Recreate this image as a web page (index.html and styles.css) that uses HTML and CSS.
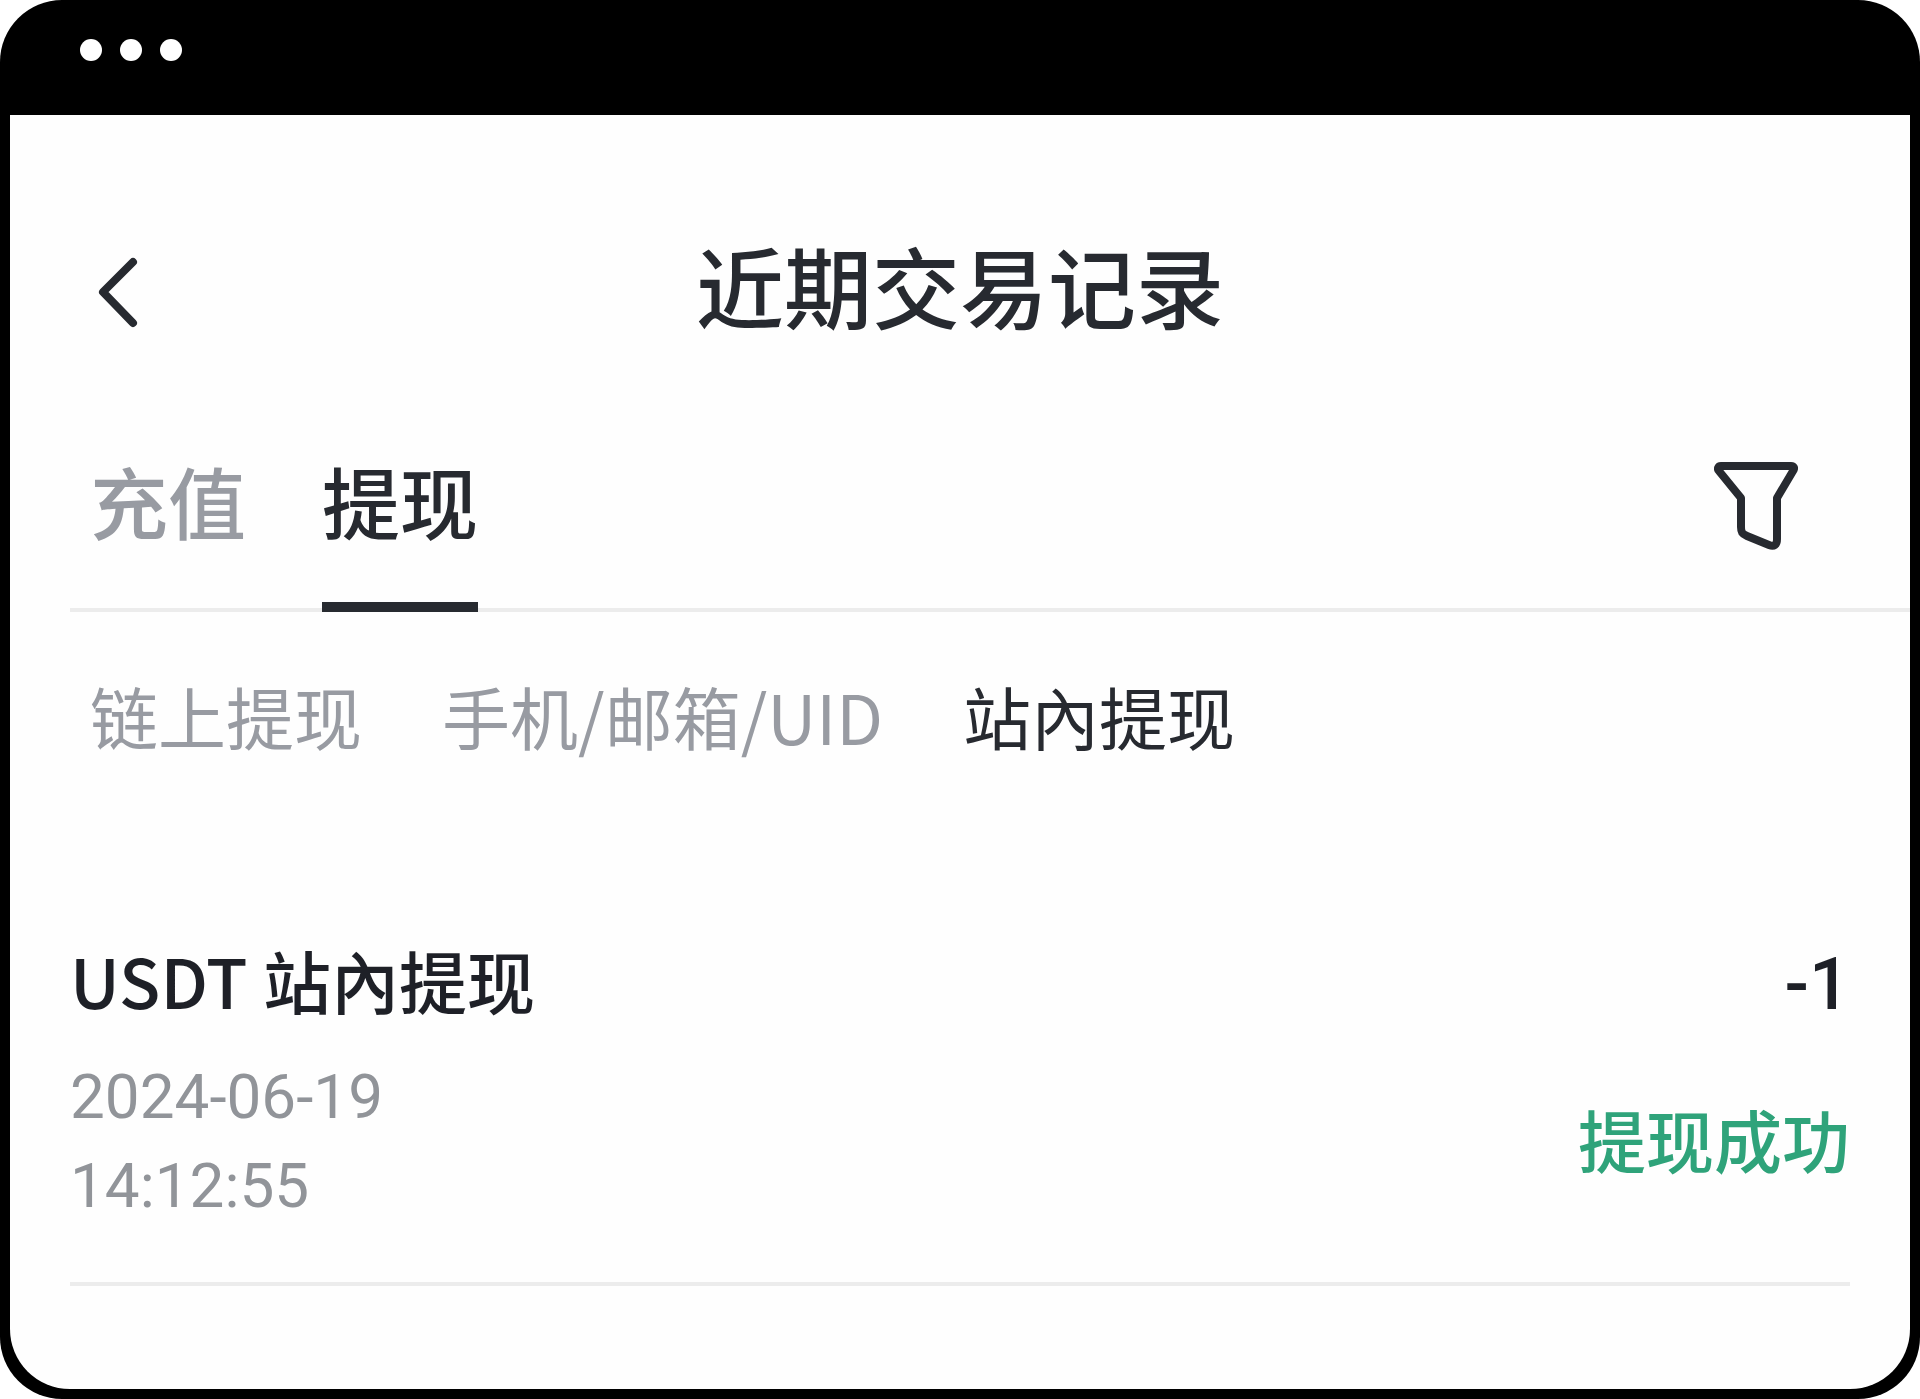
FILE: index.html
```html
<!DOCTYPE html>
<html lang="zh-CN">
<head>
    <meta charset="UTF-8">
    <meta name="viewport" content="width=device-width, initial-scale=1.0">
    <title>近期交易记录</title>
    <link rel="stylesheet" href="styles.css">
</head>
<body>
    <div class="window">
        <div class="window-bar">
            <span class="dot"></span>
            <span class="dot"></span>
            <span class="dot"></span>
        </div>
        <main class="screen">
            <header class="header">
                <button type="button" class="icon-button back" aria-label="返回">
                    <svg width="56" height="112" viewBox="0 0 56 112" fill="none" stroke="currentColor" stroke-width="8" stroke-linecap="round" stroke-linejoin="round">
                        <path d="M43 26L13 56L43 87"/>
                    </svg>
                </button>
                <h1>近期交易记录</h1>
            </header>

            <nav class="tabs">
                <button type="button" class="tab">充值</button>
                <button type="button" class="tab active">提现</button>
                <button type="button" class="icon-button filter" aria-label="筛选">
                    <svg width="84" height="88" viewBox="0 0 84 88" fill="none" stroke="currentColor" stroke-width="8" stroke-linejoin="round">
                        <path d="M7 4H77C80 4 81 6 79 9L63 36V77C63 83 60 85 55 83L33 74C28 72 27 70 27 65V36L5 9C3 7 4 4 7 4Z"/>
                    </svg>
                </button>
            </nav>

            <nav class="subtabs">
                <button type="button" class="subtab">链上提现</button>
                <button type="button" class="subtab">手机/邮箱/UID</button>
                <button type="button" class="subtab active">站內提现</button>
            </nav>

            <article class="record">
                <div class="record-top">
                    <h2>USDT 站內提现</h2>
                    <span class="amount">-1</span>
                </div>
                <div class="record-bottom">
                    <time datetime="2024-06-19T14:12:55">2024-06-19<br>14:12:55</time>
                    <span class="status">提现成功</span>
                </div>
            </article>
        </main>
    </div>
</body>
</html>
```
FILE: styles.css
```css
* {
    box-sizing: border-box;
}
body {
    margin: 0;
    background: #fff;
    color: #272a30;
    font-family: "Noto Sans CJK SC", sans-serif;
}
h1, h2 {
    margin: 0;
    font-weight: 500;
}
button {
    padding: 0;
    border: none;
    background: none;
    color: inherit;
    font-family: inherit;
    cursor: pointer;
}
svg {
    display: block;
}

/* window frame */
.window {
    display: flex;
    flex-direction: column;
    min-height: 100vh;
    padding: 0 10px 10px;
    background: #000;
    border-radius: 62px;
}
.window-bar {
    display: flex;
    gap: 18px;
    height: 115px;
    padding: 39px 70px;
}
.dot {
    width: 22px;
    height: 22px;
    border-radius: 50%;
    background: #fff;
}
.screen {
    flex: 1;
    padding-top: 105px;
    background: #fefefe;
    border-radius: 0 0 60px 60px;
}

/* title row */
.header {
    display: grid;
    grid-template-columns: 1fr auto 1fr;
    align-items: end;
    padding: 0 80px;
}
.back {
    justify-self: start;
}
.header h1 {
    font-size: 88px;
    line-height: 128px;
}

/* main tabs */
.tabs {
    display: flex;
    align-items: flex-start;
    gap: 76px;
    margin: 96px 0 0 60px;
    padding: 0 112px 0 20px;
    border-bottom: 4px solid #ececec;
}
.tab {
    margin-bottom: -4px;
    padding-bottom: 46px;
    border-bottom: 10px solid transparent;
    color: #989ba2;
    font-size: 78px;
    font-weight: 500;
    line-height: 112px;
}
.tab.active {
    border-bottom-color: #272a30;
    color: #272a30;
}
.filter {
    margin-left: auto;
    padding-top: 18px;
}

/* secondary tabs */
.subtabs {
    display: flex;
    gap: 80px;
    padding: 56px 80px 0;
}
.subtab {
    color: #989ba2;
    font-size: 68px;
    line-height: 96px;
}
.subtab.active {
    color: #272a30;
}

/* transaction */
.record {
    margin: 168px 60px 0;
    padding-bottom: 52px;
    border-bottom: 4px solid #ececec;
}
.record-top {
    display: flex;
    justify-content: space-between;
    align-items: baseline;
    color: #1e2027;
}
.record-top h2 {
    font-size: 68px;
    line-height: 96px;
}
.amount {
    font-family: Roboto, sans-serif;
    font-size: 72px;
    font-weight: 500;
    line-height: 72px;
}
.record-bottom {
    display: flex;
    justify-content: space-between;
    align-items: center;
    margin-top: 24px;
}
.record time {
    color: #919499;
    font-family: Roboto, sans-serif;
    font-size: 62px;
    line-height: 89px;
}
.status {
    padding-bottom: 4px;
    color: #2fa37a;
    font-size: 68px;
    font-weight: 500;
    line-height: 96px;
}
```
